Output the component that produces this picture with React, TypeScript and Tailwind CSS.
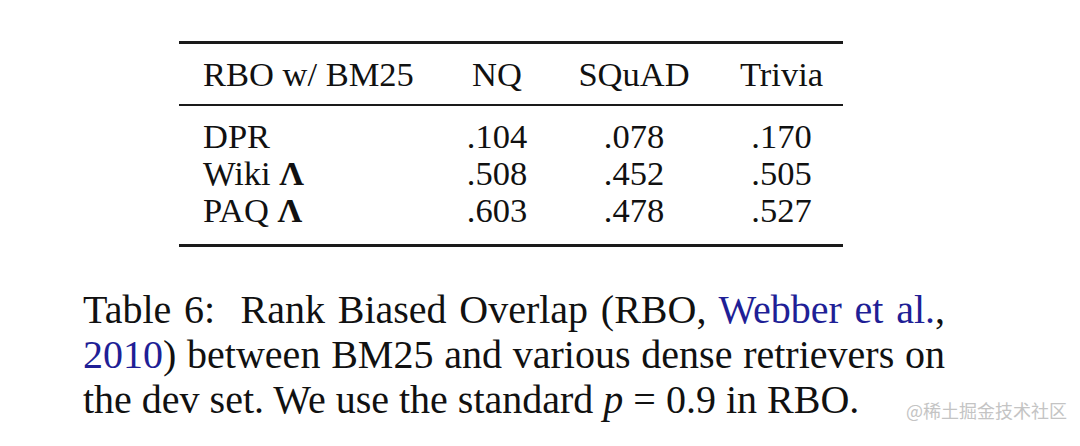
import React from "react";

const serif = { fontFamily: '"Liberation Serif", "Times New Roman", serif' };

const rows: [React.ReactNode, string, string, string][] = [
  ["DPR", ".104", ".078", ".170"],
  [
    <>
      Wiki <b>Λ</b>
    </>,
    ".508",
    ".452",
    ".505",
  ],
  [
    <>
      PAQ <b>Λ</b>
    </>,
    ".603",
    ".478",
    ".527",
  ],
];

export default function App() {
  return (
    <div
      className="relative w-[1080px] h-[446px] bg-white text-[#111] overflow-hidden"
      style={serif}
    >
      <div className="pt-[41px] ml-[179px] w-[664px]">
        <div className="border-t-[3px] border-[#1a1a1a]" />
        <div className="grid grid-cols-[261px_114px_160px_129px] text-[34.5px] leading-[37px] pt-[12px] pb-[11px]">
          <div className="pl-[24px]">RBO w/ BM25</div>
          <div className="text-center">NQ</div>
          <div className="text-center">SQuAD</div>
          <div className="text-center pl-[6px]">Trivia</div>
        </div>
        <div className="border-t-[2px] border-[#1a1a1a]" />
        <div className="pt-[12px] pb-[15px]">
          {rows.map((r, i) => (
            <div
              key={i}
              className="grid grid-cols-[261px_114px_160px_129px] text-[34.5px] leading-[37px]"
            >
              <div className="pl-[24px]">{r[0]}</div>
              <div className="text-center">{r[1]}</div>
              <div className="text-center">{r[2]}</div>
              <div className="text-center pl-[6px]">{r[3]}</div>
            </div>
          ))}
        </div>
        <div className="border-t-[3px] border-[#1a1a1a]" />
      </div>

      <div className="ml-[83px] mt-[40px] w-[862px] text-[40px] leading-[45px]">
        <div className="text-justify [text-align-last:justify] whitespace-nowrap">
          Table 6:&nbsp; Rank Biased Overlap (RBO,{" "}
          <span className="text-[#1f1f96]">Webber et al.</span>,
        </div>
        <div className="text-justify [text-align-last:justify] whitespace-nowrap">
          <span className="text-[#1f1f96]">2010</span>) between BM25 and various dense retrievers on
        </div>
        <div className="whitespace-nowrap">
          the dev set. We use the standard <i>p</i>&nbsp;=&nbsp;0.9 in RBO.
        </div>
      </div>

      <div
        className="absolute left-[906px] top-[399px] whitespace-nowrap text-[18px] leading-[22px] text-[#c4c4c4]"
        style={{ fontFamily: '"Noto Sans CJK SC", "Noto Sans", sans-serif' }}
      >
        @稀土掘金技术社区
      </div>
    </div>
  );
}
